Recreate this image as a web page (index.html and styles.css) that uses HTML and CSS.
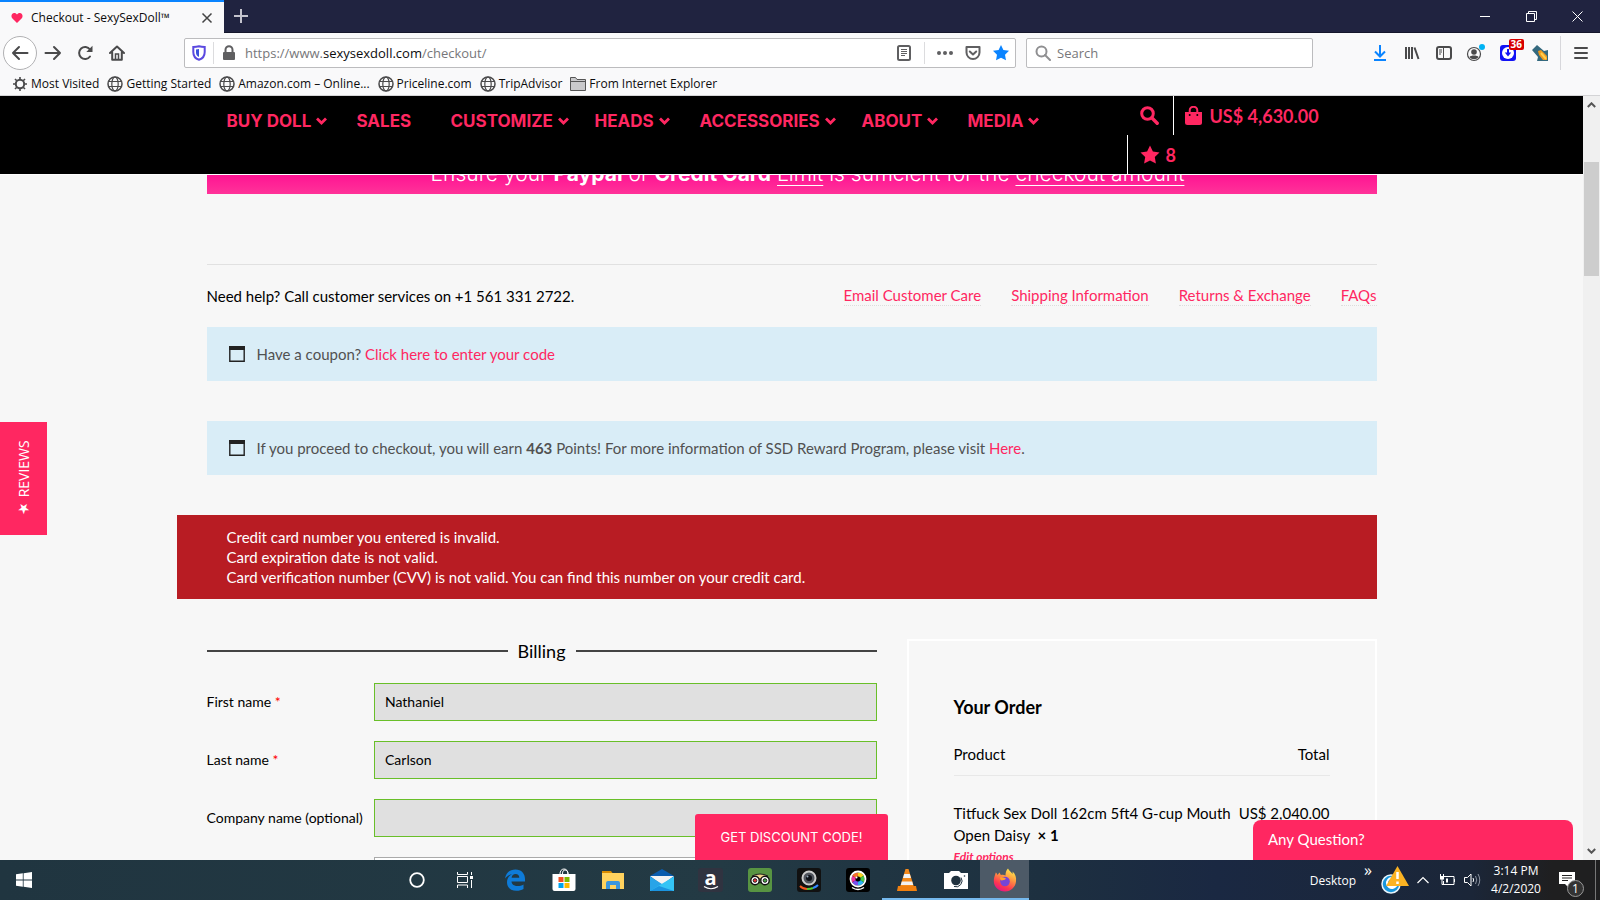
FILE: index.html
```html
<!DOCTYPE html>
<html lang="en">
<head>
<meta charset="utf-8">
<title>Checkout - SexySexDoll™</title>
<link rel="stylesheet" href="styles.css">
</head>
<body>
<div class="tabbar">
  <div class="tab">
    <svg class="tab-heart" width="12" height="12" viewBox="0 0 12 12"><path d="M6 11 1.2 6.2C-.3 4.500 .5 1 3.200 1 4.500 1 5.500 1.700 6 2.600 6.500 1.700 7.500 1 8.800 1c2.700 0 3.500 3.500 2 5.200z" fill="#ff2761"/></svg>
    <span class="tab-title">Checkout - SexySexDoll™</span>
    <button class="plain" aria-label="Close tab"><svg width="12" height="12" viewBox="0 0 12 12"><path d="M1.500 1.500l9 9M10.500 1.500l-9 9" stroke="#444" stroke-width="1.500"/></svg></button>
  </div>
  <button class="plain newtab" aria-label="New tab"><svg width="14" height="14" viewBox="0 0 14 14"><path d="M7 0v14M0 7h14" stroke="#c3c3cd" stroke-width="2"/></svg></button>
  <div class="window-buttons">
    <button class="plain" aria-label="Minimize"><svg width="11" height="11" viewBox="0 0 11 11"><path d="M0 5.500h10" stroke="#fff"/></svg></button>
    <button class="plain" aria-label="Restore"><svg width="11" height="11" viewBox="0 0 11 11"><path d="M.5 2.500h8v8h-8zM2.500 2.500v-2h8v8h-2" stroke="#fff" fill="none"/></svg></button>
    <button class="plain" aria-label="Close"><svg width="11" height="11" viewBox="0 0 11 11"><path d="M.5.5l10 10M10.500.5l-10 10" stroke="#fff"/></svg></button>
  </div>
</div>

<div class="toolbar">
  <div class="navbuttons">
    <button class="plain back" aria-label="Back"><svg width="18" height="16" viewBox="0 0 18 16"><path d="M8 2 2 8l6 6M2 8h14.500" fill="none" stroke="#4a4a4b" stroke-width="2" stroke-linecap="round" stroke-linejoin="round"/></svg></button>
    <button class="plain" aria-label="Forward"><svg width="18" height="16" viewBox="0 0 18 16"><path d="M10 2l6 6-6 6M16 8H1.500" fill="none" stroke="#4a4a4b" stroke-width="2" stroke-linecap="round" stroke-linejoin="round"/></svg></button>
    <button class="plain" aria-label="Reload"><svg width="16" height="16" viewBox="0 0 16 16"><path d="M13 11.500A6 6 0 1 1 13 4.500" fill="none" stroke="#4a4a4b" stroke-width="2" stroke-linecap="round"/><path d="M15.500.8v6.200H9.300z" fill="#4a4a4b"/></svg></button>
    <button class="plain" aria-label="Home"><svg width="16" height="16" viewBox="0 0 16 16"><path d="M1 8l7-6.500L15 8M3.200 7.500V14.800h9.600V7.500" fill="none" stroke="#4a4a4b" stroke-width="2" stroke-linecap="round" stroke-linejoin="round"/><path d="M6.500 15V9h3v6" fill="none" stroke="#4a4a4b" stroke-width="1.500"/></svg></button>
  </div>
  <div class="urlbar">
    <svg width="14" height="16" viewBox="0 0 14 16"><path d="M7 1.300C4.800 1.900 3 2 1.300 2v5c0 4 2.200 6.700 5.700 7.800 3.500-1.100 5.700-3.800 5.700-7.800V2C11 2 9.200 1.900 7 1.300z" fill="#fff" stroke="#5b49e0" stroke-width="2"/><path d="M7 4c-1 .3-1.800.4-3 .5V7.500c0 2.100 1.100 3.600 3 4.500z" fill="#3a50dc"/></svg>
    <span class="vsep"></span>
    <svg width="14" height="16" viewBox="0 0 14 16"><rect x="1" y="7" width="12" height="8" rx="1" fill="#5f5f61"/><path d="M3.500 8V4.800a3.500 3.500 0 0 1 7 0V8" fill="none" stroke="#5f5f61" stroke-width="2"/></svg>
    <span class="url">https://www.<b>sexysexdoll.com</b>/checkout/</span>
    <svg width="14" height="16" viewBox="0 0 14 16"><rect x="1" y="1" width="12" height="14" rx="1.500" fill="none" stroke="#5f5f61" stroke-width="2"/><path d="M4 4.500h6M4 6.500h6M4 8.500h6M4 10.500h4" stroke="#5f5f61"/></svg>
    <span class="vsep reader-sep"></span>
    <svg width="16" height="16" viewBox="0 0 16 16" fill="#5f5f61"><circle cx="2" cy="8" r="2"/><circle cx="8" cy="8" r="2"/><circle cx="14" cy="8" r="2"/></svg>
    <svg class="gap-l" width="16" height="16" viewBox="0 0 16 16"><path d="M1.500 2h13v5.500a6.500 6.500 0 0 1-13 0z" fill="none" stroke="#5f5f61" stroke-width="2" stroke-linejoin="round"/><path d="M4.800 6.500 8 9.500l3.200-3" fill="none" stroke="#5f5f61" stroke-width="2" stroke-linecap="round" stroke-linejoin="round"/></svg>
    <svg class="gap-l" width="16" height="16" viewBox="0 0 16 16"><path d="M8 0l2.400 5 5.600.8-4 3.900 1 5.600L8 12.700l-5 2.600 1-5.600L0 5.800 5.600 5z" fill="#0a84ff"/></svg>
  </div>
  <label class="searchbar">
    <svg width="16" height="16" viewBox="0 0 16 16"><circle cx="6.500" cy="6.500" r="5" fill="none" stroke="#8f8f91" stroke-width="2"/><path d="M10 10l5 5" stroke="#8f8f91" stroke-width="2" stroke-linecap="round"/></svg>
    <input type="text" placeholder="Search" aria-label="Search the web">
  </label>
  <div class="tools">
    <button class="plain" aria-label="Downloads"><svg width="16" height="16" viewBox="0 0 16 16"><path d="M8 0v11M3 6.500l5 5 5-5M2 15h12" fill="none" stroke="#0a84ff" stroke-width="2"/></svg></button>
    <button class="plain" aria-label="Library"><svg width="16" height="16" viewBox="0 0 16 16"><path d="M2 2v12M5 2v12M8 2v12M10.500 2.500l4 11.500" stroke="#4a4a4b" stroke-width="2"/></svg></button>
    <button class="plain" aria-label="Sidebars"><svg width="16" height="16" viewBox="0 0 16 16"><rect x="1" y="2" width="14" height="12" rx="2" fill="none" stroke="#4a4a4b" stroke-width="2"/><path d="M7.500 2v12" stroke="#4a4a4b"/><path d="M3 5h3M3 7h3M3 9h2" stroke="#4a4a4b"/></svg></button>
    <button class="plain" aria-label="Account"><svg width="20" height="18" viewBox="0 0 20 18"><circle cx="8" cy="10" r="6.500" fill="none" stroke="#4a4a4b" stroke-width="1.200"/><circle cx="8" cy="8" r="2.800" fill="#4a4a4b"/><path d="M3.500 13c1-2 8-2 9 0-2 3-7 3-9 0z" fill="#4a4a4b"/><circle cx="16" cy="3" r="3" fill="#00b3f4"/></svg></button>
    <button class="plain ext" aria-label="Download helper"><svg width="16" height="16" viewBox="0 0 16 16"><rect width="16" height="16" rx="3" fill="#1313f5"/><circle cx="8" cy="8" r="6" fill="#fff"/><path d="M8 4v5" stroke="#1313f5" stroke-width="2"/><path d="M4.800 7.500h6.400L8 11.500z" fill="#1313f5"/></svg><span class="ext-badge">36</span></button>
    <button class="plain" aria-label="Extension"><svg width="18" height="18" viewBox="0 0 18 18"><path d="M1 6l5-5 7 6 4-1v11H6l1-4z" fill="#34697e"/><path d="M7 7l3-1 6 6v4h-4l-4-5z" fill="#f09a1c"/><path d="M10 9l5 6" stroke="#ffd04f" stroke-width="2"/></svg></button>
    <span class="toolsep"></span>
    <button class="plain" aria-label="Menu"><svg width="14" height="14" viewBox="0 0 14 14"><path d="M1 2h12M1 7h12M1 12h12" stroke="#4a4a4b" stroke-width="2" stroke-linecap="round"/></svg></button>
  </div>
</div>

<svg class="defs" width="0" height="0"><symbol id="globe" viewBox="0 0 16 16"><circle cx="8" cy="8" r="7" fill="none" stroke="#4a4a4b" stroke-width="1.500"/><ellipse cx="8" cy="8" rx="3.200" ry="7" fill="none" stroke="#4a4a4b" stroke-width="1.200"/><path d="M1.500 5.500h13M1.500 10.500h13" stroke="#4a4a4b" stroke-width="1.200"/></symbol>
<symbol id="chev" viewBox="0 0 11 8"><path d="M1 1.500l4.500 4.500L10 1.500" fill="none" stroke="#ff2761" stroke-width="2.800"/></symbol>
<symbol id="panel" viewBox="0 0 16 16"><path d="M.8 2v13.200h14.400V2" fill="none" stroke="#222" stroke-width="1.400"/><rect width="16" height="4" fill="#222"/></symbol></svg>

<nav class="bookmarks" aria-label="Bookmarks">
  <a href="#"><svg width="16" height="16" viewBox="0 0 16 16"><circle cx="8" cy="8" r="4.200" fill="none" stroke="#4a4a4b" stroke-width="2"/><path d="M8 1v2.500M8 12.500V15M1 8h2.500M12.500 8H15M3 3l1.800 1.800M11.200 11.200 13 13M13 3l-1.800 1.800M4.800 11.200 3 13" stroke="#4a4a4b" stroke-width="1.600"/></svg>Most Visited</a>
  <a href="#"><svg width="16" height="16"><use href="#globe"/></svg>Getting Started</a>
  <a href="#"><svg width="16" height="16"><use href="#globe"/></svg>Amazon.com – Online...</a>
  <a href="#"><svg width="16" height="16"><use href="#globe"/></svg>Priceline.com</a>
  <a href="#"><svg width="16" height="16"><use href="#globe"/></svg>TripAdvisor</a>
  <a href="#"><svg width="16" height="16" viewBox="0 0 16 16"><path d="M.5 14V1.500h5l1.500 2h8.500V14.500H.5z" fill="#c9c9cb" stroke="#555"/><path d="M1 5.500h14" stroke="#555"/></svg>From Internet Explorer</a>
</nav>

<div class="viewport">
  <div class="page">
    <header class="site-header">
      <div class="header-inner">
        <nav class="menu" aria-label="Main">
          <a href="#">BUY DOLL <svg width="11" height="8"><use href="#chev"/></svg></a>
          <a href="#">SALES</a>
          <a href="#">CUSTOMIZE <svg width="11" height="8"><use href="#chev"/></svg></a>
          <a href="#">HEADS <svg width="11" height="8"><use href="#chev"/></svg></a>
          <a href="#">ACCESSORIES <svg width="11" height="8"><use href="#chev"/></svg></a>
          <a href="#">ABOUT <svg width="11" height="8"><use href="#chev"/></svg></a>
          <a href="#">MEDIA <svg width="11" height="8"><use href="#chev"/></svg></a>
        </nav>
        <div class="header-tools">
          <div class="tool-row">
            <button class="plain search-btn" aria-label="Search"><svg width="19" height="19" viewBox="0 0 19 19"><circle cx="7.500" cy="7.500" r="5.800" fill="none" stroke="#ff2761" stroke-width="3"/><path d="M12 12l5.200 5.200" stroke="#ff2761" stroke-width="3.400" stroke-linecap="round"/></svg></button>
            <a class="cart" href="#"><svg width="17" height="19" viewBox="0 0 17 19"><path d="M0 6h17v10.500a2.500 2.500 0 0 1-2.500 2.500h-12A2.500 2.500 0 0 1 0 16.500z" fill="#ff2761"/><path d="M4.700 9V4.500a3.800 3.800 0 0 1 7.600 0V9" fill="none" stroke="#ff2761" stroke-width="2"/><circle cx="4.700" cy="9" r="1" fill="#000"/><circle cx="12.300" cy="9" r="1" fill="#000"/></svg>US$ 4,630.00</a>
          </div>
          <div class="tool-row">
            <a class="wish" href="#"><svg width="20" height="19" viewBox="0 0 20 19"><path d="M10 .5l2.900 5.900 6.600 1-4.700 4.600 1.100 6.500L10 15.400l-5.900 3.100 1.100-6.500L.5 7.400l6.600-1z" fill="#ff2761"/></svg>8</a>
          </div>
        </div>
      </div>
    </header>

    <main class="container">
      <div class="banner"><p>Ensure your <b>Paypal</b> or <b>Credit Card</b> <u>Limit</u> is sufficient for the <u>checkout amount</u></p></div>

      <div class="help">
        <p>Need help? Call customer services on +1 561 331 2722.</p>
        <nav aria-label="Help">
          <a href="#">Email Customer Care</a><a href="#">Shipping Information</a><a href="#">Returns &amp; Exchange</a><a href="#">FAQs</a>
        </nav>
      </div>

      <div class="notice"><svg width="16" height="16"><use href="#panel"/></svg><p>Have a coupon? <a href="#">Click here to enter your code</a></p></div>
      <div class="notice"><svg width="16" height="16"><use href="#panel"/></svg><p>If you proceed to checkout, you will earn <b>463</b> Points! For more information of SSD Reward Program, please visit <a href="#">Here</a>.</p></div>

      <ul class="errors">
        <li>Credit card number you entered is invalid.</li>
        <li>Card expiration date is not valid.</li>
        <li>Card verification number (CVV) is not valid. You can find this number on your credit card.</li>
      </ul>

      <div class="columns">
        <form class="billing">
          <h3>Billing</h3>
          <div class="field"><label for="first">First name <i>*</i></label><input id="first" type="text" value="Nathaniel"></div>
          <div class="field"><label for="last">Last name <i>*</i></label><input id="last" type="text" value="Carlson"></div>
          <div class="field"><label for="company">Company name (optional)</label><input id="company" type="text"></div>
          <div class="field"><span></span><input class="empty" type="text" aria-label="Country"></div>
        </form>
        <section class="order">
          <h3>Your Order</h3>
          <table>
            <thead><tr><th>Product</th><th>Total</th></tr></thead>
            <tbody><tr><td>Titfuck Sex Doll 162cm 5ft4 G-cup Mouth Open Daisy &nbsp;<b>× 1</b><a class="edit" href="#">Edit options</a></td><td>US$ 2,040.00</td></tr></tbody>
          </table>
        </section>
      </div>
    </main>
    <button class="reviews">★ REVIEWS</button>
    <button class="discount">GET DISCOUNT CODE!</button>
    <button class="chat">Any Question?</button>
  </div>
  <div class="scrollbar">
    <svg width="9" height="6" viewBox="0 0 9 6"><path d="M.8 5 4.500 1.300 8.200 5" fill="none" stroke="#555" stroke-width="2"/></svg>
    <span class="thumb"></span>
    <svg width="9" height="6" viewBox="0 0 9 6"><path d="M.8 1l3.700 3.700L8.200 1" fill="none" stroke="#555" stroke-width="2"/></svg>
  </div>
</div>

<footer class="taskbar">
  <button class="plain start" aria-label="Start"><svg width="16" height="16" viewBox="0 0 16 16" fill="#fff"><path d="M0 2.300 6.800 1.300v6.200H0zM7.600 1.200 16 0v7.500H7.600zM0 8.400h6.800v6.300L0 13.700zM7.600 8.400H16V16l-8.400-1.200z"/></svg></button>
  <div class="apps">
    <button class="plain" aria-label="Cortana"><svg width="24" height="24" viewBox="0 0 24 24"><circle cx="12" cy="12" r="6.800" fill="none" stroke="#fff" stroke-width="1.800"/></svg></button>
    <button class="plain" aria-label="Task view"><svg width="24" height="24" viewBox="0 0 24 24"><path d="M3.500 4v2.500h10V4M3.500 20v-3h10v3M3.500 8.500h10v6h-10zM17.500 4v3M17.500 12v8" fill="none" stroke="#fff"/><path d="M16 8h3v3h-3z" fill="#fff"/></svg></button>
    <button class="plain" aria-label="Edge"><svg width="24" height="24" viewBox="0 0 24 24"><path d="M2 10.500C3 4.500 7 1.500 12.500 1.500c6 0 9.500 4.200 9.500 9.500v2.500H8.500c.2 3 2.800 4.500 6 4.500 2.300 0 4.300-.6 6-1.600v4.500c-2 1.200-4.300 1.800-7 1.800-6 0-9.500-3.500-9.500-8.500 0-3.700 2-6.600 5.300-8.200C5.500 7 3.500 8.700 2 10.500zM8.600 9.700h7.700c0-2.300-1.300-3.700-3.700-3.700-2.300 0-3.800 1.500-4 3.700z" fill="#0e7bd8"/></svg></button>
    <button class="plain" aria-label="Store"><svg width="24" height="24" viewBox="0 0 24 24"><path d="M.5 6h23v15a2 2 0 0 1-2 2h-19a2 2 0 0 1-2-2z" fill="#fff"/><path d="M8 6c0-3 1.500-5 4-5s4 2 4 5M10.500 6c0-3 1-4 2.500-4s3 1 3 4" fill="none" stroke="#fff"/><path d="M6.500 9h5v5h-5z" fill="#f25022"/><path d="M12.500 9h5v5h-5z" fill="#7fba00"/><path d="M6.500 15h5v5h-5z" fill="#00a4ef"/><path d="M12.500 15h5v5h-5z" fill="#ffb900"/></svg></button>
    <button class="plain" aria-label="File Explorer"><svg width="24" height="24" viewBox="0 0 24 24"><path d="M1 3h9l1.500 2H1z" fill="#d98b00"/><path d="M1 5h22v16H1z" fill="#ffd25e"/><path d="M5 21v-6q0-2 2-2h10q2 0 2 2v6h-4v-4H9v4z" fill="#3a96dd"/></svg></button>
    <button class="plain" aria-label="Mail"><svg width="24" height="24" viewBox="0 0 24 24"><path d="M0 8 12 1l12 7v4H0z" fill="#0a5cae"/><path d="M0 8h24l-12 9z" fill="#f3f3f3"/><path d="M0 8.500 12 16v7H0z" fill="#28a4e8"/><path d="M24 8.500 0 23h24z" fill="#34c4f5"/><path d="M9 18 24 23H0z" fill="#1b94e0"/></svg></button>
    <button class="plain amazon" aria-label="Amazon"><span>a</span><svg width="16" height="4" viewBox="0 0 16 4"><path d="M1 .5Q8 5 15 .5" fill="none" stroke="#fff" stroke-width="1.200"/></svg></button>
    <button class="plain" aria-label="TripAdvisor"><svg width="24" height="24" viewBox="0 0 24 24"><rect width="24" height="24" rx="3" fill="#589442"/><path d="M4 8q8-4 16 0l-4 3H8z" fill="#f0d28a" stroke="#222"/><circle cx="7" cy="12.500" r="4.200" fill="#fff" stroke="#111" stroke-width="1.400"/><circle cx="17" cy="12.500" r="4.200" fill="#fff" stroke="#111" stroke-width="1.400"/><circle cx="7" cy="12.500" r="1.800" fill="#e33" stroke="#222"/><circle cx="17" cy="12.500" r="1.800" fill="#4a4" stroke="#222"/><path d="M11 14h2l-1 2z" fill="#111"/></svg></button>
    <button class="plain" aria-label="Webcam"><svg width="24" height="24" viewBox="0 0 24 24"><rect width="24" height="24" rx="3" fill="#111"/><circle cx="12" cy="10" r="6.500" fill="#50545c" stroke="#ccc" stroke-width="2"/><circle cx="12" cy="10" r="3" fill="#0d1016"/><circle cx="10.500" cy="8.500" r="1" fill="#9ab"/><path d="M3 18q3 3 7 3" stroke="#f2591e" stroke-width="2" fill="none"/><path d="M10 21q4 0 6-1" stroke="#5c3" stroke-width="2" fill="none"/><path d="M16 20q3-1 5-3" stroke="#38f" stroke-width="2" fill="none"/></svg></button>
    <button class="plain" aria-label="Camera studio"><svg width="24" height="24" viewBox="0 0 24 24"><rect width="24" height="24" rx="3" fill="#000"/><g fill="none" stroke-width="4"><path d="M12 6.500a4.500 4.500 0 0 1 4 2.300" stroke="#f5d21f"/><path d="M16 8.800a4.500 4.500 0 0 1 0 4.500" stroke="#48c848"/><path d="M16 13.300a4.500 4.500 0 0 1-4 2.200" stroke="#2bb4f5"/><path d="M12 15.500a4.500 4.500 0 0 1-4-2.200" stroke="#7a4ff0"/><path d="M8 13.300a4.500 4.500 0 0 1 0-4.500" stroke="#f034a0"/><path d="M8 8.800a4.500 4.500 0 0 1 4-2.300" stroke="#f5702a"/></g><circle cx="12" cy="11" r="7.500" fill="none" stroke="#fff" stroke-width="1.800"/><circle cx="10.500" cy="9.500" r="1" fill="#fff"/><path d="M6 19.500q6 4 12 0" fill="none" stroke="#fff" stroke-width="1.500"/></svg></button>
    <button class="plain running" aria-label="VLC"><svg width="24" height="24" viewBox="0 0 24 24"><path d="M10.500 1h3L19 19H5z" fill="#f58a1b"/><path d="M9.200 6h5.600l1.200 4H8zM6.800 13.500h10.400l1 3.500H5.700z" fill="#f2f2f2"/><path d="M3 18h18l1 5H2z" fill="#f08010"/></svg></button>
    <button class="plain running" aria-label="Camera"><svg width="24" height="24" viewBox="0 0 24 24"><path d="M0 5h5l2-2h8l2 2h7v16H0z" fill="#fff"/><circle cx="12" cy="12.500" r="4.800" fill="#20323f"/><path d="M17 9.500a6 6 0 0 1-7 9" fill="none" stroke="#20323f"/><circle cx="20.500" cy="8" r=".8" fill="#20323f"/></svg></button>
    <button class="plain running active" aria-label="Firefox"><svg width="24" height="24" viewBox="0 0 24 24"><defs><linearGradient id="fx" x1=".8" y1="0" x2=".3" y2="1"><stop offset="0" stop-color="#fff44f"/><stop offset=".4" stop-color="#ff9640"/><stop offset=".75" stop-color="#ff3750"/><stop offset="1" stop-color="#e31587"/></linearGradient></defs><path d="M15 .5c1 2 3 3.500 4.500 5.500.3-.8.2-1.500 0-2.500 3 2.500 4 6 3.500 10C22.500 19 18 23.500 12 23.500S.8 19 .8 13c0-3.500 1.200-5.500 2-8.500 1 .5 1.200 1.500 1.700 2.500.7-1 1.500-2 2.500-2.500 0 1 .3 2 1 2.500 1.500-.3 3-.2 4.500.5C12.500 5 13 2 15 .5z" fill="url(#fx)"/><circle cx="12" cy="13.500" r="4.800" fill="#7645d8"/><path d="M7 9.500c2-.5 4 0 6 1-1 1.500-3 1.500-4.500 2-1-.5-1.500-1.500-1.500-3z" fill="#ffa02e"/></svg></button>
  </div>
  <div class="tray">
    <span>Desktop</span>
    <span class="more">»</span>
    <svg class="alert" width="30" height="28" viewBox="0 0 30 28"><circle cx="11" cy="18" r="9" fill="#1896dc" stroke="#e8f4fb" stroke-width="1.500"/><path d="M15 13a5 5 0 1 0 1 7H8" fill="none" stroke="#fff" stroke-width="2"/><path d="M17.500 0 29 20H6z" fill="#fbb323"/><path d="M17.500 6v7M17.500 15.500v2.500" stroke="#fff" stroke-width="2.500"/></svg>
    <svg width="12" height="8" viewBox="0 0 12 8"><path d="M.5 7 6 1.500 11.500 7" fill="none" stroke="#fff" stroke-width="1.200"/></svg>
    <svg class="battery" width="17" height="12" viewBox="0 0 17 12"><path d="M5 2.500h10v8H4.500V7M15.500 5v3" fill="none" stroke="#fff"/><path d="M7 4.500h2v4H7zM1 2h4v3.500H1z" fill="#fff"/><path d="M1.500 0v2M4.500 0v2M3 5v5.500h2" fill="none" stroke="#fff"/></svg>
    <svg width="17" height="14" viewBox="0 0 17 14"><path d="M.5 4.500h3l3.500-3.500v12L3.500 9.500h-3z" fill="none" stroke="#fff"/><path d="M9 5q1.200 2 0 4" fill="none" stroke="#fff"/><path d="M11.500 3q2.500 4 0 8M14 1q3.500 6 0 12" fill="none" stroke="#8b93a0"/></svg>
    <div class="clock"><span>3:14 PM</span><span>4/2/2020</span></div>
    <div class="action"><svg width="16" height="16" viewBox="0 0 16 16"><path d="M0 0h16v12h-6v4l-4-4H0z" fill="#fff"/><path d="M3 3.500h10M3 6h10M3 8.500h6" stroke="#222"/></svg><span class="count">1</span></div>
    <span class="peek"></span>
  </div>
</footer>
</body>
</html>
```
FILE: styles.css
```css
* { box-sizing: border-box; }
body {
  margin: 0;
  height: 100vh;
  display: flex;
  flex-direction: column;
  overflow: hidden;
  font-family: "Open Sans", "Noto Sans", sans-serif;
  font-size: 12px;
  color: #0c0c0d;
  background: #f9f9fa;
}
p, h3, ul { margin: 0; padding: 0; }
a { text-decoration: none; color: inherit; }
svg { flex: none; display: block; }
.defs { position: absolute; }
.plain {
  border: 0;
  padding: 0;
  background: none;
  display: flex;
  align-items: center;
  justify-content: center;
  font: inherit;
}

/* Browser chrome */
.tabbar { flex: none; height: 33px; display: flex; background: #202340; border-bottom: 1px solid #14162b; }
.tab {
  width: 224px;
  height: 33px;
  display: flex;
  align-items: center;
  gap: 8px;
  padding: 0 11px;
  background: #f9f9fa;
  border-top: 2px solid #0a84ff;
}
.tab-title { flex: 1; white-space: nowrap; }
.newtab { width: 34px; }
.window-buttons { margin-left: auto; display: flex; }
.window-buttons .plain { width: 46px; }
.toolbar { flex: none; height: 39px; display: flex; align-items: center; padding: 0 3px; }
.navbuttons { display: flex; align-items: center; width: 181px; }
.navbuttons .plain { width: 32px; height: 34px; }
.navbuttons .back { width: 34px; border: 1px solid #b1b1b3; border-radius: 50%; background: #fff; }
.urlbar, .searchbar {
  display: flex;
  align-items: center;
  height: 30px;
  background: #fff;
  border: 1px solid #bcbcbe;
  border-radius: 2px;
  font-size: 13px;
  color: #77777a;
}
.urlbar { flex: 1; padding: 0 6px 0 7px; }
.vsep { width: 1px; height: 22px; background: #dcdcde; margin: 0 8px 0 7px; }
.reader-sep { margin: 0 12px 0 13px; }
.url { flex: 1; margin-left: 9px; }
.url b { font-weight: 400; color: #0c0c0d; }
.gap-l { margin-left: 12px; }
.searchbar { width: 287px; margin-left: 10px; padding: 0 8px; }
.searchbar input { flex: 1; min-width: 0; border: 0; background: none; font: inherit; outline: 0; padding: 0 6px; }
.searchbar input::placeholder { color: #77777a; opacity: 1; }
.tools { display: flex; align-items: center; margin-left: 51px; }
.tools .plain { width: 32px; height: 34px; }
.ext { position: relative; }
.ext-badge {
  position: absolute;
  top: 3px;
  right: 0;
  padding: 0 2px;
  background: #d70000;
  border-radius: 2px;
  color: #fff;
  font-size: 10px;
  line-height: 11px;
  font-weight: 700;
}
.toolsep { width: 1px; height: 34px; background: #d7d7db; margin: 0 4px; }
.bookmarks {
  flex: none;
  height: 24px;
  display: flex;
  align-items: center;
  gap: 8px;
  padding: 0 12px;
  border-bottom: 1px solid #d4d4d6;
  white-space: nowrap;
}
.bookmarks a { display: flex; align-items: center; gap: 3px; }

/* Web page */
.viewport { flex: 1; min-height: 0; display: flex; }
.page {
  flex: 1;
  position: relative;
  overflow: hidden;
  background: #f7f7f7;
  font-family: Lato, sans-serif;
  font-size: 15px;
  color: #000;
}
.site-header { background: #000; border-bottom: 1px solid #fff; }
.header-inner { max-width: 1170px; height: 78px; margin: 0 auto; padding-left: 20px; display: flex; }
.menu {
  display: grid;
  grid-template-columns: 130px 94px 144px 105px 162px 106px 106px;
  height: 50px;
  align-items: center;
  font: 700 17px/22px Inter, sans-serif;
  color: #ff2761;
  white-space: nowrap;
}
.menu a { display: flex; align-items: center; gap: 5px; }
.header-tools { margin-left: 53px; color: #ff2761; font-size: 18px; font-weight: 700; }
.tool-row { display: flex; height: 39px; }
.search-btn { width: 46px; }
.cart { display: flex; align-items: center; gap: 8px; padding: 0 11px; border-left: 1px solid #fff; }
.wish { display: flex; align-items: center; gap: 6px; padding: 0 12px; border-left: 1px solid #fff; }
.container { max-width: 1170px; margin: 0 auto; }
.banner {
  height: 19px;
  overflow: hidden;
  display: flex;
  align-items: flex-end;
  justify-content: center;
  margin-bottom: 70px;
  padding-left: 32px;
  background: linear-gradient(#ff1493, #ff3399);
  color: #fff;
  font: 300 21px/40px Inter, sans-serif;
  white-space: nowrap;
}
.banner b { font-weight: 700; }
.banner u { text-decoration-thickness: 1px; text-underline-offset: 4px; }
.help {
  display: flex;
  justify-content: space-between;
  align-items: center;
  height: 63px;
  border-top: 1px solid #e1e1e1;
}
.help nav { display: flex; gap: 30px; }
.help nav a { color: #ff2761; line-height: 18px; padding-bottom: 1px; border-bottom: 1px dotted #ddd; }
.notice {
  display: flex;
  align-items: center;
  gap: 12px;
  height: 54px;
  margin-bottom: 40px;
  padding: 0 22px;
  background: #d9edf7;
  color: #515151;
}
.notice a { color: #ff2761; }
.errors {
  list-style: none;
  margin: 0 0 40px -30px;
  padding: 12px 50px;
  background: #b81c23;
  color: #fff;
  line-height: 20px;
}
.columns { display: grid; grid-template-columns: 67fr 47fr; gap: 30px; }
.billing h3 {
  display: flex;
  align-items: center;
  gap: 10px;
  margin-bottom: 20px;
  font-size: 18px;
  font-weight: 400;
  line-height: 24px;
}
.billing h3::before, .billing h3::after { content: ""; flex: 1; height: 2px; background: #444; }
.field {
  display: grid;
  grid-template-columns: 1fr 3fr;
  align-items: center;
  margin-bottom: 20px;
  font-size: 14px;
}
.field label { padding-bottom: 2px; }
.field i { color: #f00; font-style: normal; }
.field input {
  width: 100%;
  height: 38px;
  padding: 0 10px 2px;
  border: 1px solid #69bf29;
  border-radius: 0;
  background: #e0e0e0;
  font: inherit;
  color: #000;
}
.field .empty { background: #fff; border-color: #aaa; }
.order { border: 2px solid #fff; padding: 54px 45px 0; height: 400px; }
.order h3 { font-size: 18px; line-height: 24px; margin-bottom: 24px; }
.order table { width: 100%; border-collapse: collapse; line-height: 22px; }
.order th { padding: 0 0 10px; font-weight: 400; text-align: left; border-bottom: 1px solid #e8e8e8; }
.order td { padding: 26px 0 0; vertical-align: top; }
.order th:last-child, .order td:last-child { text-align: right; width: 94px; white-space: nowrap; }
.edit { display: block; color: #ff2761; font-size: 12px; font-style: italic; font-weight: 700; }
.reviews, .discount, .chat { position: absolute; border: 0; background: #ff2761; color: #fff; }
.reviews {
  left: 0;
  top: 326px;
  width: 47px;
  height: 113px;
  writing-mode: vertical-rl;
  transform: rotate(180deg);
  font: 14px "Open Sans", sans-serif;
}
.discount {
  left: 695px;
  bottom: 0;
  width: 193px;
  height: 46px;
  border-radius: 3px 3px 0 0;
  font: 13px Inter, sans-serif;
}
.chat {
  right: 10px;
  bottom: 0;
  width: 320px;
  height: 40px;
  padding: 0 15px 2px;
  border-radius: 8px 8px 0 0;
  font: 15px Lato, sans-serif;
  text-align: left;
}
.scrollbar {
  width: 17px;
  display: flex;
  flex-direction: column;
  align-items: center;
  padding: 6px 0;
  background: #f0f0f0;
}
.thumb { width: 15px; height: 114px; margin: 54px 0 auto; background: #cdcdcd; }

/* Taskbar */
.taskbar {
  flex: none;
  height: 40px;
  display: flex;
  background: linear-gradient(90deg, #203540 0, #233a44 45%, #1d3040 65%, #1a2842 76%, #1b2638 92%, #1f1f20 97%);
  color: #fff;
}
.start { width: 48px; }
.apps { display: flex; margin-left: 344px; }
.apps .plain { width: 49px; }
.running { box-shadow: inset 0 -2px #76b9ed; }
.apps .active { background: #4d5a67; }
.apps .amazon { flex-direction: column; width: 25px; height: 24px; margin: 8px 12px; background: #303340; border-radius: 3px; }
.amazon span { color: #fff; font: 700 20px/16px "Open Sans", sans-serif; }
.tray { margin-left: auto; display: flex; align-items: center; }
.more { margin: 0 8px; font-size: 16px; line-height: 16px; padding-bottom: 20px; }
.alert { margin-right: 7px; }
.battery { margin: 0 8px 0 10px; }
.clock { display: flex; flex-direction: column; align-items: center; line-height: 18px; width: 70px; }
.action { position: relative; margin: 0 20px 0 8px; }
.count {
  position: absolute;
  left: 8px;
  top: 8px;
  width: 17px;
  height: 17px;
  border: 1px solid #999;
  border-radius: 50%;
  background: #333;
  text-align: center;
  line-height: 15px;
}
.peek { width: 5px; height: 40px; border-left: 1px solid #777; }
```
